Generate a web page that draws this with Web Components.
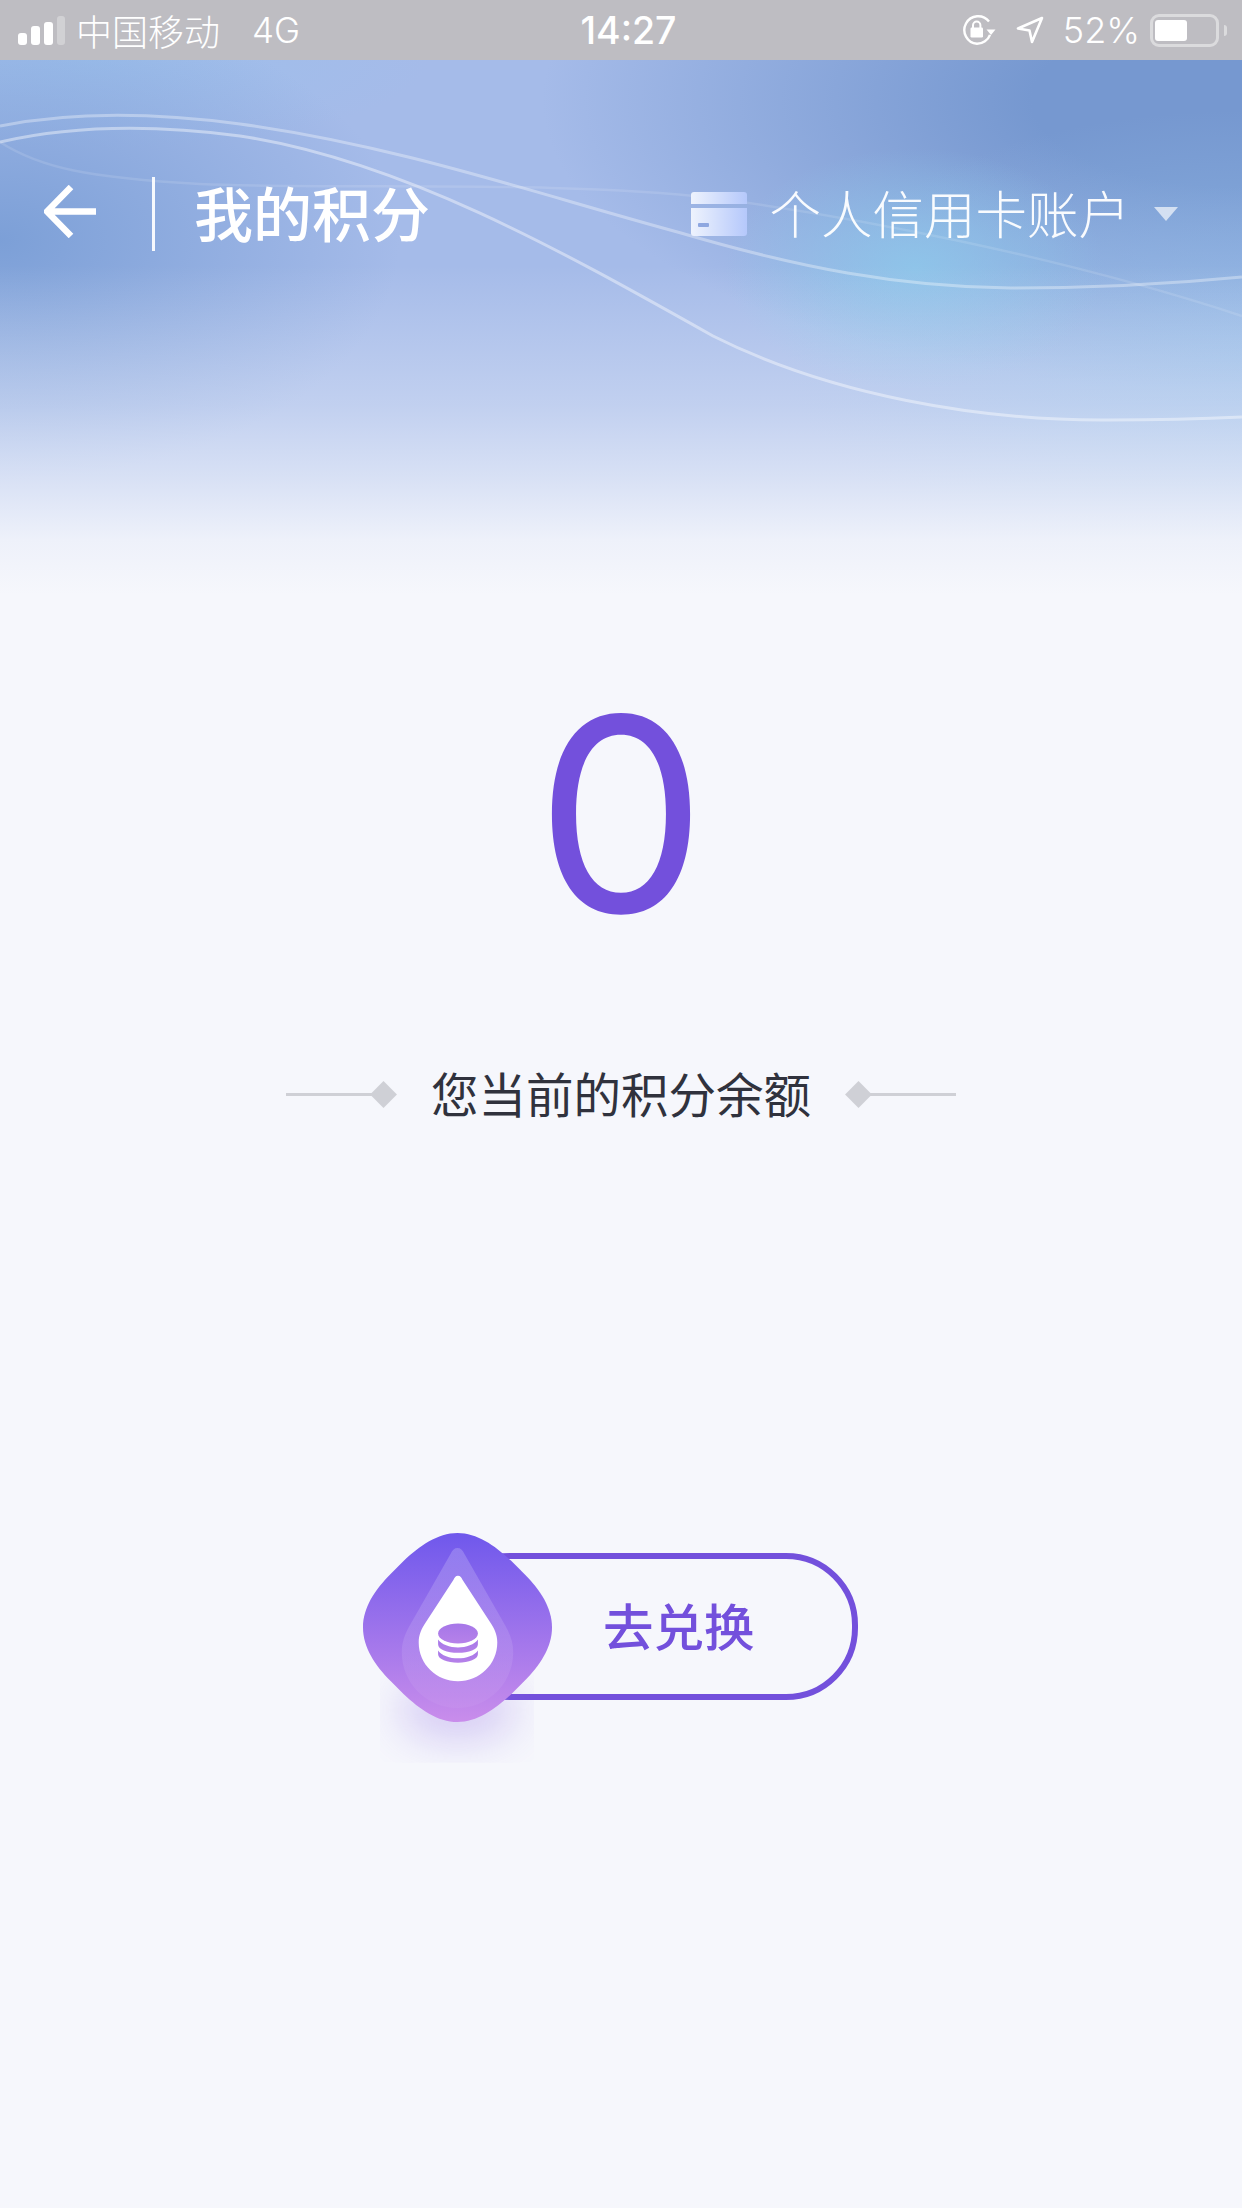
<!DOCTYPE html>
<html lang="zh">
<head>
<meta charset="utf-8">
<title>我的积分</title>
<style>
  html, body { margin: 0; padding: 0; background: #f6f7fc; }
  body { font-family: "Noto Sans CJK SC", "Noto Sans", sans-serif; }
</style>
</head>
<body>
<points-screen>
  <status-bar slot="status"></status-bar>
  <hero-header slot="hero" title="我的积分" account="个人信用卡账户"></hero-header>
  <points-balance slot="balance" value="0" label="您当前的积分余额"></points-balance>
  <redeem-button slot="action">去兑换</redeem-button>
</points-screen>

<script>
customElements.define("points-screen", class extends HTMLElement {
    connectedCallback() {
        this.attachShadow({mode: 'open'});
        this.shadowRoot.innerHTML = `
        <style>
          :host {
            display: flex;
            flex-direction: column;
            width: 1242px;
            height: 2208px;
            background: #f6f7fc;
            overflow: hidden;
          }
          .action {
            display: flex;
            justify-content: center;
            margin-top: 409px;
            padding-right: 21px;
          }
        </style>
        <slot name="status"></slot>
        <slot name="hero"></slot>
        <slot name="balance"></slot>
        <div class="action"><slot name="action"></slot></div>
        `;
    }
});

customElements.define("status-bar", class extends HTMLElement {
    connectedCallback() {
        this.attachShadow({mode: 'open'});
        this.shadowRoot.innerHTML = `
        <style>
          :host {
            display: grid;
            grid-template-columns: 1fr auto 1fr;
            align-items: center;
            height: 60px;
            padding: 0 15px 0 18px;
            box-sizing: border-box;
            background: #bebdc2;
            color: #fff;
            font: 300 36px "Noto Sans CJK SC", "Noto Sans", sans-serif;
          }
          .left, .right { display: flex; align-items: center; }
          .right { justify-content: flex-end; }
          .signal { display: flex; align-items: flex-end; gap: 4px; height: 29px; margin-right: 11px; }
          .signal i { width: 9px; background: #fff; border-radius: 3px; }
          .signal i:nth-child(1) { height: 12px; }
          .signal i:nth-child(2) { height: 19px; }
          .signal i:nth-child(3) { height: 23px; }
          .signal i:nth-child(4) { height: 29px; width: 8px; background: rgba(255,255,255,.3); }
          .net { margin-left: 32px; font-family: Inter, "Noto Sans", sans-serif; font-size: 35px; }
          .time { font: 500 37.5px Inter, "Noto Sans", sans-serif; margin-left: 12px; }
          .pct { font: 300 36px Inter, "Noto Sans", sans-serif; margin: 0 10px 0 19px; }
          svg { display: block; }
          .lock { margin-right: 20px; }
          .batt {
            position: relative;
            width: 69px;
            height: 33px;
            box-sizing: border-box;
            border: 3px solid rgba(255,255,255,.45);
            border-radius: 9px;
            margin-right: 8px;
          }
          .batt::before {
            content: "";
            position: absolute;
            left: 2px; top: 3px;
            width: 32px; height: 21px;
            background: #fff;
            border-radius: 3px;
          }
          .batt::after {
            content: "";
            position: absolute;
            right: -11px; top: 8px;
            width: 3px; height: 11px;
            background: rgba(255,255,255,.45);
            border-radius: 0 3px 3px 0;
          }
        </style>
        <div class="left">
          <div class="signal"><i></i><i></i><i></i><i></i></div>
          <span>中国移动</span><span class="net">4G</span>
        </div>
        <div class="time">14:27</div>
        <div class="right">
          <svg class="lock" width="34" height="32" viewBox="0 0 34 32" fill="none">
            <path d="M27 7.500A13.800 13.800 0 1 0 15 29.800a13.800 13.800 0 0 0 13-9" stroke="#fff" stroke-width="2.400"/>
            <path d="M24.500 15.500h9l-4.500 5.500z" fill="#fff"/>
            <rect x="8.500" y="13.500" width="12.500" height="10" rx="1.200" fill="#fff"/>
            <path d="M11 14V11.200a3.700 3.700 0 0 1 7.400 0V14" stroke="#fff" stroke-width="2"/>
          </svg>
          <svg width="28" height="28" viewBox="0 0 28 28" fill="none">
            <path d="M26 2 2 12.500l11.500 2 2.500 11.500z" stroke="#fff" stroke-width="2.600" stroke-linejoin="round"/>
          </svg>
          <span class="pct">52%</span>
          <div class="batt"></div>
        </div>
        `;
    }
});

customElements.define("hero-header", class extends HTMLElement {
    connectedCallback() {
        const title = this.getAttribute("title");
        const account = this.getAttribute("account");
        this.attachShadow({mode: 'open'});
        this.shadowRoot.innerHTML = `
        <style>
          :host {
            display: block;
            position: relative;
            height: 540px;
            color: #fff;
            background:
              linear-gradient(to bottom, rgba(246,247,252,0) 38%, rgba(246,247,252,.35) 64%, rgba(246,247,252,.62) 77%, rgba(246,247,252,.9) 89%, #f6f7fc 99%),
              radial-gradient(ellipse 190px 120px at 915px 208px, rgba(142,198,234,.9), rgba(142,198,234,0)),
              radial-gradient(ellipse 400px 240px at 0px 180px, rgba(122,158,214,.95), rgba(122,158,214,0)),
              radial-gradient(ellipse 340px 90px at 90px 0px, rgba(156,192,236,.8), rgba(156,192,236,0)),
              radial-gradient(ellipse 460px 240px at 1242px 290px, rgba(150,190,232,.7), rgba(150,190,232,0)),
              radial-gradient(ellipse 700px 290px at 1242px 40px, rgba(118,152,208,1) 30%, rgba(118,152,208,0)),
              #a5bbe9;
          }
          .waves { position: absolute; left: 0; top: 0; pointer-events: none; }
          .nav {
            position: relative;
            display: flex;
            align-items: center;
            height: 74px;
            padding: 117px 64px 0 44px;
          }
          .back { display: block; margin: -5px 55px 0 0; }
          .divider { width: 3px; height: 74px; background: rgba(255,255,255,.92); margin-right: 39px; }
          .title { font-size: 59px; font-weight: 500; line-height: 74px; flex: 1; margin-top: -5px; }
          .account { display: flex; align-items: center; }
          .name { font-size: 51.500px; font-weight: 300; line-height: 74px; margin: -4px 24px 0 22px; color: rgba(255,255,255,.95); }
          .card { display: block; }
        </style>
        <svg class="waves" width="1242" height="540" viewBox="0 0 1242 540" fill="none">
          <g transform="translate(0,-60)">
            <path d="M0 126C70 112 150 112 240 124C400 146 540 195 681 233C800 268 900 287 1010 288C1100 288 1180 283 1242 277" stroke="rgba(255,255,255,.34)" stroke-width="3"/>
            <path d="M0 142C70 126 150 124 240 136C400 160 560 250 713 336C830 395 980 421 1109 420C1160 420 1200 419 1242 417" stroke="rgba(255,255,255,.42)" stroke-width="3"/>
            <path d="M0 142C40 168 90 178 200 184C340 190 560 180 713 198C850 216 1060 256 1242 316" stroke="rgba(255,255,255,.12)" stroke-width="2.500"/>
          </g>
        </svg>
        <div class="nav">
          <svg class="back" width="53" height="53" viewBox="0 0 53 53" fill="none">
            <path d="M52 26.500H4M27 2 3 26.500 27 51" stroke="#fff" stroke-width="6.400"/>
          </svg>
          <div class="divider"></div>
          <div class="title">${title}</div>
          <div class="account">
            <svg class="card" width="56" height="44" viewBox="0 0 56 44">
              <defs><linearGradient id="cg" x1="0" x2="1" y1="0" y2="0"><stop offset="0" stop-color="#eef3fd"/><stop offset="1" stop-color="#b5c8fb"/></linearGradient></defs>
              <path d="M3 0h50a3 3 0 0 1 3 3v9H0V3a3 3 0 0 1 3-3z" fill="url(#cg)"/>
              <path d="M0 16h56v25a3 3 0 0 1-3 3H3a3 3 0 0 1-3-3z" fill="url(#cg)"/>
              <rect x="7" y="31" width="11" height="4" rx="1" fill="#8ea7e0"/>
            </svg>
            <span class="name">${account}</span>
            <svg width="24" height="14" viewBox="0 0 24 14"><path d="M0 0h24L12 14z" fill="rgba(255,255,255,.65)"/></svg>
          </div>
        </div>
        `;
    }
});

customElements.define("points-balance", class extends HTMLElement {
    connectedCallback() {
        const value = this.getAttribute("value");
        const label = this.getAttribute("label");
        this.attachShadow({mode: 'open'});
        this.shadowRoot.innerHTML = `
        <style>
          :host {
            display: flex;
            flex-direction: column;
            align-items: center;
            margin-top: 74px;
          }
          .value {
            font: 400 270px/280px Inter, "Noto Sans", sans-serif;
            color: #7350dc;
            height: 280px;
          }
          .label {
            display: flex;
            align-items: center;
            margin-top: 110px;
            height: 60px;
            color: #30323d;
            font-size: 47.500px;
            font-weight: 400;
          }
          .rule { display: flex; align-items: center; width: 111px; }
          .rule.right { flex-direction: row-reverse; }
          .rule b { flex: 1; height: 3px; background: #cfd0d6; }
          .rule i { width: 19px; height: 19px; background: #cfd0d6; transform: rotate(45deg); margin: 0 4px 0 -4px; }
          .rule.right i { margin: 0 -4px 0 4px; }
          .text { margin: -4px 34px 0; white-space: nowrap; }
        </style>
        <div class="value">${value}</div>
        <div class="label">
          <div class="rule"><b></b><i></i></div>
          <div class="text">${label}</div>
          <div class="rule right"><b></b><i></i></div>
        </div>
        `;
    }
});

customElements.define("redeem-button", class extends HTMLElement {
    connectedCallback() {
        this.attachShadow({mode: 'open'});
        this.shadowRoot.innerHTML = `
        <style>
          :host {
            display: block;
            position: relative;
            width: 495px;
            height: 189px;
          }
          .pill {
            display: flex;
            align-items: center;
            box-sizing: border-box;
            margin: 20px 0 0 75px;
            width: 420px;
            height: 147px;
            padding: 0 0 5px 159px;
            border: 6px solid #7350dc;
            border-radius: 72px;
            color: #7350dc;
            font-size: 50.500px;
            font-weight: 500;
          }
          svg { position: absolute; left: 0; top: 0; overflow: visible; }
        </style>
        <div class="pill"><slot></slot></div>
        <svg width="189" height="189" viewBox="0 0 190 190" fill="none">
          <defs>
            <linearGradient id="bg" x1="0" x2="0" y1="0" y2="1"><stop offset="0" stop-color="#6f58ec"/><stop offset="1" stop-color="#c98deb"/></linearGradient>
            <linearGradient id="ig" x1="0" x2="0" y1="0" y2="1"><stop offset="0" stop-color="#fff" stop-opacity=".2"/><stop offset="1" stop-color="#fff" stop-opacity=".04"/></linearGradient>
            <linearGradient id="cn" x1="0" x2="0" y1="0" y2="1"><stop offset="0" stop-color="#a677e8"/><stop offset="1" stop-color="#b681e9"/></linearGradient>
            <filter id="sh" x="-50%" y="-50%" width="200%" height="200%"><feGaussianBlur stdDeviation="22"/></filter>
            <clipPath id="cl"><rect x="17" y="100" width="155" height="131"/></clipPath>
          </defs>
          <g clip-path="url(#cl)"><ellipse cx="95" cy="178" rx="60" ry="30" fill="#8f6ee6" opacity=".32" filter="url(#sh)"/></g>
          <path d="M95 0C115 0 133 13 149 28L162 41C178 57 190 75 190 95C190 115 178 133 162 149L149 162C133 177 115 190 95 190C75 190 57 177 41 162L28 149C12 133 0 115 0 95C0 75 12 57 28 41L41 28C57 13 75 0 95 0Z" fill="url(#bg)"/>
          <path d="M95 15C98 15 100 17 102 21L143 93C148 102 151 110 151 120C151 151 126 176 95 176C64 176 39 151 39 120C39 110 42 102 47 93L88 21C90 17 92 15 95 15Z" fill="url(#ig)"/>
          <path d="M95.500 43C98 43 99 45 100 47L128 90C132 96 135 102 135 110C135 132 117 149 95.500 149C74 149 56 132 56 110C56 102 59 96 63 90L91 47C92 45 93 43 95.500 43Z" fill="#fff"/>
          <ellipse cx="95.500" cy="101" rx="20" ry="10" fill="url(#cn)"/>
          <path d="M75.500 107c3 5 12 8 20 8s17-3 20-8v5c0 5-9 8.500-20 8.500s-20-3.500-20-8.500z" fill="url(#cn)"/>
          <path d="M75.500 118c3 5 12 8 20 8s17-3 20-8v4c0 5-9 8.500-20 8.500s-20-3.500-20-8.500z" fill="url(#cn)"/>
        </svg>
        `;
    }
});
</script>
</body>
</html>
